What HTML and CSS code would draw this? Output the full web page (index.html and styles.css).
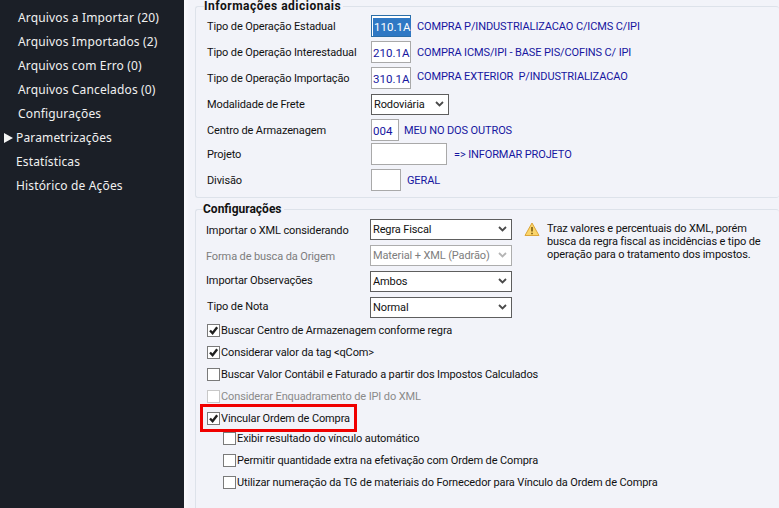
FILE: index.html
```html
<!DOCTYPE html>
<html lang="pt-BR">
<head>
    <meta charset="UTF-8">
    <title>Parametrizações</title>
    <link rel="stylesheet" href="styles.css">
</head>
<body>
    <div class="app">
        <!-- Side menu -->
        <nav class="sidebar">
            <div class="menu-item sub">Arquivos a Importar (20)</div>
            <div class="menu-item sub">Arquivos Importados (2)</div>
            <div class="menu-item sub">Arquivos com Erro (0)</div>
            <div class="menu-item sub">Arquivos Cancelados (0)</div>
            <div class="menu-item sub">Configurações</div>
            <div class="menu-item active">Parametrizações</div>
            <div class="menu-item">Estatísticas</div>
            <div class="menu-item">Histórico de Ações</div>
        </nav>

        <main class="content">
            <fieldset class="group group-info">
                <legend>Informações adicionais</legend>
                <div class="row row-26">
                    <label>Tipo de Operação Estadual</label>
                    <span class="code selected"><span>110.1A</span></span>
                    <span class="desc">COMPRA P/INDUSTRIALIZACAO C/ICMS C/IPI</span>
                </div>
                <div class="row row-26">
                    <label>Tipo de Operação Interestadual</label>
                    <span class="code">210.1A</span>
                    <span class="desc">COMPRA ICMS/IPI - BASE PIS/COFINS C/ IPI</span>
                </div>
                <div class="row row-26">
                    <label>Tipo de Operação Importação</label>
                    <span class="code">310.1A</span>
                    <span class="desc up">COMPRA EXTERIOR  P/INDUSTRIALIZACAO</span>
                </div>
                <div class="row row-26">
                    <label>Modalidade de Frete</label>
                    <span class="select select-frete">Rodoviária
                        <svg class="chevron" viewBox="0 0 9 6"><path d="M1 1l3.5 3.5L8 1" /></svg>
                    </span>
                </div>
                <div class="row row-26">
                    <label>Centro de Armazenagem</label>
                    <span class="code code-short">004</span>
                    <span class="desc narrow-gap">MEU NO DOS OUTROS</span>
                </div>
                <div class="row row-projeto">
                    <label>Projeto</label>
                    <span class="code code-wide"></span>
                    <span class="desc wide-gap">=&gt; INFORMAR PROJETO</span>
                </div>
                <div class="row row-26">
                    <label>Divisão</label>
                    <span class="code code-div"></span>
                    <span class="desc">GERAL</span>
                </div>
            </fieldset>

            <fieldset class="group group-config">
                <legend>Configurações</legend>
                <div class="config-top">
                    <div class="config-selects">
                        <div class="row row-26">
                            <label class="lower">Importar o XML considerando</label>
                            <span class="select">Regra Fiscal
                                <svg class="chevron" viewBox="0 0 9 6"><path d="M1 1l3.5 3.5L8 1" /></svg>
                            </span>
                        </div>
                        <div class="row row-26 disabled">
                            <label class="lower">Forma de busca da Origem</label>
                            <span class="select">Material + XML (Padrão)
                                <svg class="chevron" viewBox="0 0 9 6"><path d="M1 1l3.5 3.5L8 1" /></svg>
                            </span>
                        </div>
                        <div class="row row-26">
                            <label class="higher">Importar Observações</label>
                            <span class="select">Ambos
                                <svg class="chevron" viewBox="0 0 9 6"><path d="M1 1l3.5 3.5L8 1" /></svg>
                            </span>
                        </div>
                        <div class="row row-26">
                            <label class="higher nudge">Tipo de Nota</label>
                            <span class="select">Normal
                                <svg class="chevron" viewBox="0 0 9 6"><path d="M1 1l3.5 3.5L8 1" /></svg>
                            </span>
                        </div>
                    </div>
                    <div class="notice">
                        <svg class="warn" viewBox="0 0 16 15">
                            <path d="M8 1L15 13.5H1Z" fill="#fbd56a" stroke="#dca63a" stroke-linejoin="round" />
                            <path d="M8 5v4.5" stroke="#7a5a10" stroke-width="1.6" />
                            <path d="M8 10.7v1.5" stroke="#7a5a10" stroke-width="1.6" />
                        </svg>
                        <p>Traz valores e percentuais do XML, porém<br>busca da regra fiscal as incidências e tipo de<br>operação para o tratamento dos impostos.</p>
                    </div>
                </div>

                <div class="checks">
                    <div class="check-row"><span class="box checked"><svg viewBox="0 0 12 12"><path d="M2.2 6l2.8 3L10 2.5" /></svg></span>Buscar Centro de Armazenagem conforme regra</div>
                    <div class="check-row"><span class="box checked"><svg viewBox="0 0 12 12"><path d="M2.2 6l2.8 3L10 2.5" /></svg></span>Considerar valor da tag &lt;qCom&gt;</div>
                    <div class="check-row"><span class="box"></span>Buscar Valor Contábil e Faturado a partir dos Impostos Calculados</div>
                    <div class="check-row disabled"><span class="box"></span>Considerar Enquadramento de IPI do XML</div>
                    <div class="check-row highlight"><span class="box checked"><svg viewBox="0 0 12 12"><path d="M2.2 6l2.8 3L10 2.5" /></svg></span>Vincular Ordem de Compra</div>
                    <div class="nested-list">
                        <div class="check-row nested"><span class="box"></span>Exibir resultado do vínculo automático</div>
                        <div class="check-row nested"><span class="box"></span>Permitir quantidade extra na efetivação com Ordem de Compra</div>
                        <div class="check-row nested"><span class="box"></span>Utilizar numeração da TG de materiais do Fornecedor para Vínculo da Ordem de Compra</div>
                    </div>
                </div>
            </fieldset>
        </main>
    </div>
</body>
</html>
```
FILE: styles.css
```css
* {
    margin: 0;
    padding: 0;
    box-sizing: border-box;
}

html,
body {
    height: 100%;
    overflow: hidden;
}

body {
    font-family: Roboto, "Noto Sans", sans-serif;
    font-size: 11px;
    letter-spacing: -0.12px;
    color: #111;
    background: #f2f3f9;
}

.app {
    display: flex;
    height: 508px;
}

/* Side menu */
.sidebar {
    width: 184px;
    flex-shrink: 0;
    background: #1b1f27;
    color: #f0f0f0;
    padding-top: 6px;
    font-family: "Noto Sans", sans-serif;
    font-size: 12px;
    letter-spacing: 0.15px;
}

.menu-item {
    height: 24px;
    line-height: 24px;
    padding-left: 16px;
    position: relative;
}

.menu-item.sub {
    padding-left: 18px;
}

.menu-item.active::before {
    content: "";
    position: absolute;
    left: 4px;
    top: 7px;
    border-left: 9px solid #f4f4f4;
    border-top: 5px solid transparent;
    border-bottom: 5px solid transparent;
}

/* Main panel */
.content {
    flex: 1;
    padding: 0 0 0 11px;
    background: linear-gradient(to right, #fbfbfd 0, #f2f3f9 6px);
}

.group {
    border: 1px solid #dde2ea;
    border-radius: 3px;
    border-right: none;
    padding: 0 0 0 8px;
}

.group legend {
    font-weight: bold;
    color: #111;
    padding: 0 2px 0 0;
    font-size: 12px;
    line-height: 13px;
}

.group-info {
    height: 198px;
}

.group-info legend {
    letter-spacing: 0.5px;
}

.group-config {
    margin-top: 5px;
    height: 320px;
}

.group-config legend {
    margin-left: -1px;
    letter-spacing: 0;
}

.row {
    display: flex;
    align-items: center;
}

.row-26 {
    height: 26px;
}

.row-projeto {
    height: 22px;
    margin-bottom: 2px;
}

.row label {
    width: 167px;
    flex-shrink: 0;
    padding-left: 3px;
    white-space: nowrap;
}

.config-selects .row label {
    width: 166px;
    padding-left: 2px;
}

.config-selects .row label.nudge {
    padding-left: 3px;
}

.row label.lower {
    margin-top: 2px;
}

.row label.higher {
    margin-bottom: 2px;
}

.code {
    display: block;
    width: 40px;
    height: 22px;
    line-height: 22px;
    border: 1px solid #a9a9a9;
    background: #fff;
    color: #1616a0;
    padding-left: 1px;
    flex-shrink: 0;
    font-size: 11.5px;
    letter-spacing: 0;
}

.code.selected {
    border: 1px solid #2b6ea8;
    color: #fff;
}

.code.selected span {
    display: inline-block;
    background: #2f78c4;
    line-height: 18px;
    padding: 0 1px;
}

.code-short {
    width: 28px;
}

.code-wide {
    width: 76px;
}

.code-div {
    width: 30px;
}

.desc {
    color: #1616a0;
    margin-left: 6px;
    white-space: pre;
}

.desc.up {
    position: relative;
    top: -2px;
}

.desc.wide-gap {
    margin-left: 7px;
}

.desc.narrow-gap {
    margin-left: 5px;
}

.select {
    position: relative;
    display: block;
    width: 142px;
    height: 21px;
    line-height: 19px;
    border: 1px solid #5e5e5e;
    background: #fff;
    padding-left: 2px;
}

.select-frete {
    width: 78px;
}

.chevron {
    position: absolute;
    right: 4px;
    top: 6px;
    width: 9px;
    height: 6px;
    fill: none;
    stroke: #4a4a4a;
    stroke-width: 1.8;
}

.row.disabled label {
    color: #7d7d7d;
}

.row.disabled .select {
    border-color: #adadad;
    color: #7d7d7d;
}

.row.disabled .chevron {
    stroke: #b5b5b5;
}

.config-top {
    display: flex;
    height: 103px;
}

.config-selects {
    width: 320px;
    flex-shrink: 0;
}

.notice {
    display: flex;
    gap: 7px;
    padding-top: 6px;
}

.warn {
    width: 16px;
    height: 15px;
    flex-shrink: 0;
}

.notice p {
    line-height: 13px;
    white-space: nowrap;
}

/* Checkbox rows */
.check-row {
    display: flex;
    align-items: center;
    height: 22px;
    padding-left: 3px;
    white-space: nowrap;
    position: relative;
}

.box {
    width: 13px;
    height: 13px;
    border: 1px solid #7a7a7a;
    background: #fff;
    margin-right: 1px;
    flex-shrink: 0;
}

.box svg {
    display: block;
    width: 11px;
    height: 11px;
    fill: none;
    stroke: #1f1f1f;
    stroke-width: 2.6;
}

.check-row.disabled {
    color: #8a8a8a;
}

.check-row.disabled .box {
    border-color: #c8c8c8;
}

.nested-list {
    margin-top: -2px;
}

.check-row.nested {
    padding-left: 19px;
}

.highlight::after {
    content: "";
    box-sizing: border-box;
    position: absolute;
    left: -4px;
    top: -3px;
    width: 157px;
    height: 28px;
    border: 3px solid #f00000;
}
```
